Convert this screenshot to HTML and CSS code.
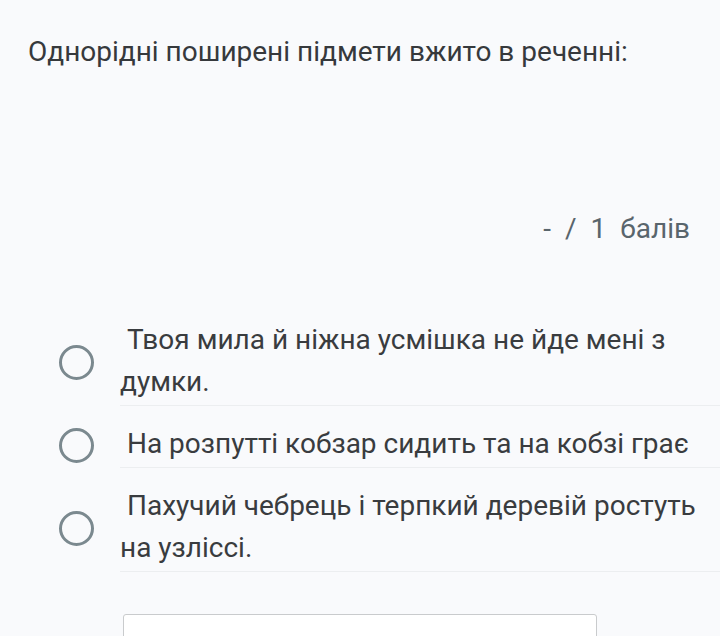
FILE: index.html
```html
<!DOCTYPE html>
<html lang="uk">
<head>
<meta charset="utf-8">
<link rel="stylesheet" href="styles.css">
</head>
<body>
<div class="page">
  <h1 class="question">Однорідні поширені підмети вжито в реченні:</h1>
  <div class="score"><span>-</span><span>/</span><span>1</span><span>балів</span></div>
  <div class="options">
    <div class="option">
      <span class="radio"></span>
      <div class="label"> Твоя мила й ніжна усмішка не йде мені з думки.</div>
    </div>
    <div class="option">
      <span class="radio"></span>
      <div class="label"> На розпутті кобзар сидить та на кобзі грає</div>
    </div>
    <div class="option">
      <span class="radio"></span>
      <div class="label"> Пахучий чебрець і терпкий деревій ростуть на узліссі.</div>
    </div>
  </div>
  <div class="answer"></div>
</div>
</body>
</html>
```
FILE: styles.css
```css
html, body {
  margin: 0;
  padding: 0;
  background: #f9fafc;
}
body {
  font-family: Roboto, "Noto Sans", sans-serif;
  color: #3a3d40;
  overflow: hidden;
}
.page {
  padding: 32px 0 0 28px;
}
.question {
  margin: 0;
  font-size: 28px;
  font-weight: 400;
  line-height: 40px;
  color: #36393c;
}
.score {
  display: flex;
  justify-content: flex-end;
  gap: 14px;
  margin-top: 137px;
  padding-right: 30px;
  font-size: 28px;
  line-height: 40px;
  color: #59656c;
}
.options {
  margin-top: 70px;
}
.option {
  display: flex;
  align-items: center;
  margin-top: 17px;
}
.option:first-child {
  margin-top: 0;
}
.radio {
  flex: none;
  box-sizing: border-box;
  width: 35px;
  height: 35px;
  border: 3px solid #7b898f;
  border-radius: 50%;
  margin-left: 31px;
  margin-right: 26px;
}
.label {
  flex: 1;
  white-space: pre-wrap;
  font-size: 28px;
  line-height: 42px;
  padding-bottom: 2px;
  color: #393c3f;
  border-bottom: 1px solid #eceef0;
  padding-right: 20px;
}
.answer {
  box-sizing: border-box;
  width: 474px;
  height: 40px;
  margin: 42px 0 0 95px;
  background: #ffffff;
  border: 1px solid #c9cbcd;
  border-radius: 3px;
}
```
